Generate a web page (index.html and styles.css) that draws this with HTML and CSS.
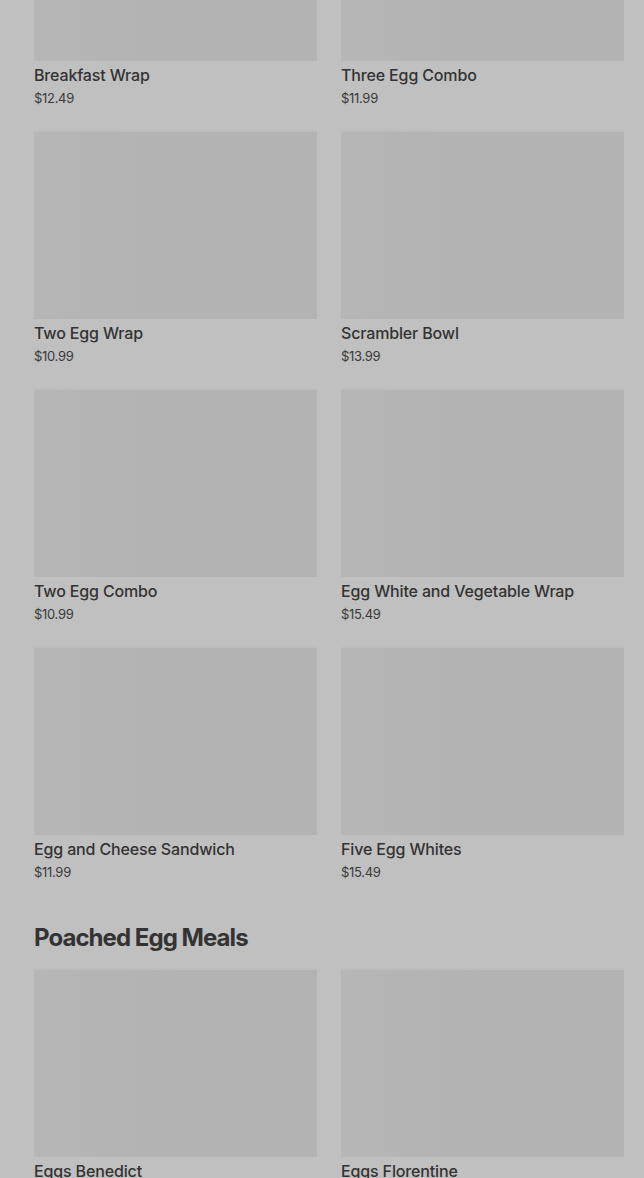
FILE: index.html
```html
<!DOCTYPE html>
<html lang="en">
<head>
<meta charset="utf-8">
<title>Menu</title>
<link rel="stylesheet" href="styles.css">
</head>
<body>
<main class="menu">
  <section class="section section-first">
    <div class="grid">
      <div class="card"><div class="thumb"></div><div class="name">Breakfast Wrap</div><div class="price">$12.49</div></div>
      <div class="card"><div class="thumb"></div><div class="name">Three Egg Combo</div><div class="price">$11.99</div></div>
      <div class="card"><div class="thumb"></div><div class="name">Two Egg Wrap</div><div class="price">$10.99</div></div>
      <div class="card"><div class="thumb"></div><div class="name">Scrambler Bowl</div><div class="price">$13.99</div></div>
      <div class="card"><div class="thumb"></div><div class="name">Two Egg Combo</div><div class="price">$10.99</div></div>
      <div class="card"><div class="thumb"></div><div class="name">Egg White and Vegetable Wrap</div><div class="price">$15.49</div></div>
      <div class="card"><div class="thumb"></div><div class="name">Egg and Cheese Sandwich</div><div class="price">$11.99</div></div>
      <div class="card"><div class="thumb"></div><div class="name">Five Egg Whites</div><div class="price">$15.49</div></div>
    </div>
  </section>
  <section class="section">
    <h2 class="heading">Poached Egg Meals</h2>
    <div class="grid">
      <div class="card"><div class="thumb"></div><div class="name">Eggs Benedict</div><div class="price">$14.99</div></div>
      <div class="card"><div class="thumb"></div><div class="name">Eggs Florentine</div><div class="price">$14.99</div></div>
    </div>
  </section>
</main>
</body>
</html>
```

FILE: styles.css
```css
html, body {
  margin: 0;
  padding: 0;
  background: #c0c0c0;
  overflow: hidden;
}
body {
  font-family: Inter, "Liberation Sans", sans-serif;
  color: #333333;
}
.menu {
  padding: 0 20px 0 34px;
}
.section-first {
  margin-top: -126px;
}
.grid {
  display: grid;
  grid-template-columns: 283px 283px;
  column-gap: 24px;
  row-gap: 25px;
}
.card {
  display: flex;
  flex-direction: column;
}
.thumb {
  height: 187px;
  background: linear-gradient(90deg, #b6b6b6 0, #b4b4b4 60px, #b3b3b3 140px, #b3b3b3 100%);
  box-shadow: 0 -2px 0 #bdbdbd;
}
.name {
  margin-top: 4px;
  font-size: 16px;
  line-height: 20px;
  font-weight: 500;
  letter-spacing: -0.15px;
  color: #333333;
}
.price {
  margin-top: 4px;
  font-size: 13px;
  line-height: 18px;
  font-weight: 400;
  color: #3a3a3a;
  letter-spacing: -0.3px;
}
.heading {
  margin: 41px 0 16px;
  font-size: 24px;
  line-height: 32px;
  font-weight: 700;
  letter-spacing: -0.95px;
  color: #333333;
}
```
